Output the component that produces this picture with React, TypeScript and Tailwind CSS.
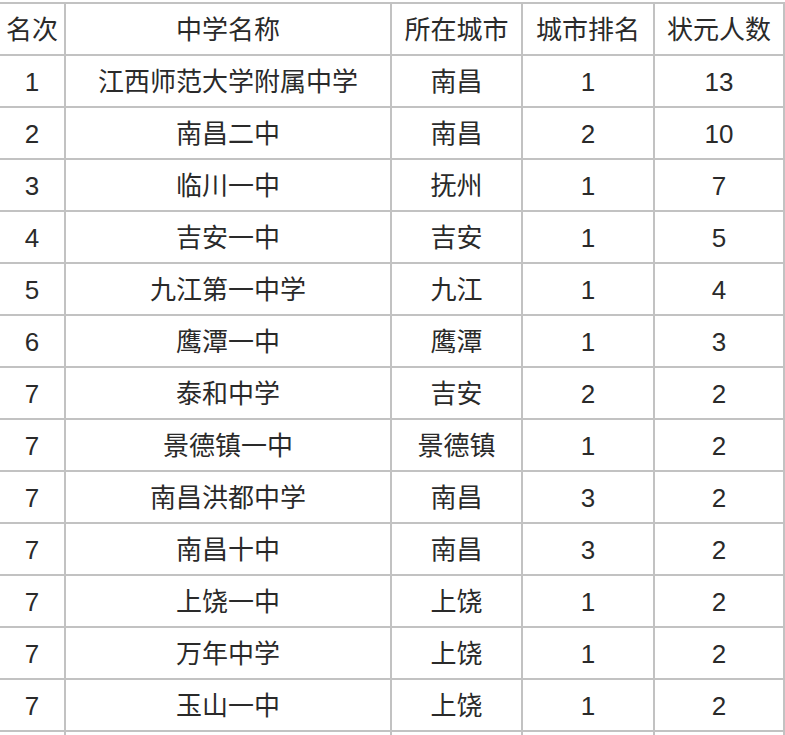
import React from "react";

const rows: string[][] = [
  ["名次", "中学名称", "所在城市", "城市排名", "状元人数"],
  ["1", "江西师范大学附属中学", "南昌", "1", "13"],
  ["2", "南昌二中", "南昌", "2", "10"],
  ["3", "临川一中", "抚州", "1", "7"],
  ["4", "吉安一中", "吉安", "1", "5"],
  ["5", "九江第一中学", "九江", "1", "4"],
  ["6", "鹰潭一中", "鹰潭", "1", "3"],
  ["7", "泰和中学", "吉安", "2", "2"],
  ["7", "景德镇一中", "景德镇", "1", "2"],
  ["7", "南昌洪都中学", "南昌", "3", "2"],
  ["7", "南昌十中", "南昌", "3", "2"],
  ["7", "上饶一中", "上饶", "1", "2"],
  ["7", "万年中学", "上饶", "1", "2"],
  ["7", "玉山一中", "上饶", "1", "2"],
  ["", "", "", "", ""],
];

export default function App() {
  return (
    <div className="w-[785px] h-[735px] overflow-hidden bg-white">
      <div
        className="ml-[-2px] mt-[2px] grid grid-cols-[66px_326px_131px_132px_130px] border-t-2 border-l-2 border-[#c2c2c2] text-[26px] text-[#2a2a2a]"
        style={{ fontFamily: '"Liberation Sans", "Noto Sans CJK SC", sans-serif' }}
      >
        {rows.map((r, i) =>
          r.map((c, j) => (
            <div
              key={`${i}-${j}`}
              className="h-[52px] flex items-center justify-center border-r-2 border-b-2 border-[#c2c2c2] leading-none pt-[2px]"
            >
              {c}
            </div>
          ))
        )}
      </div>
    </div>
  );
}
